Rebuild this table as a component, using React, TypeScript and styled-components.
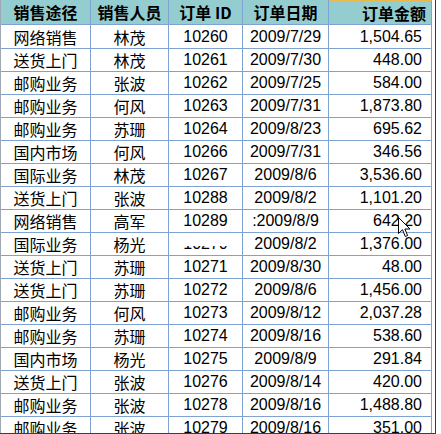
import React from "react";
import styled, { createGlobalStyle } from "styled-components";

const Global = createGlobalStyle`
  html, body { margin: 0; padding: 0; background: #ffffff; }
  body { font-family: "Liberation Sans", "Noto Sans CJK SC", sans-serif; }
`;

const Frame = styled.div`
  position: relative;
  width: 435px;
  height: 433px;
  overflow: hidden;
  border-right: 1px solid #3c3c3c;
  border-bottom: 1px solid #3c3c3c;
  box-sizing: content-box;
`;

const Grid = styled.div`
  display: grid;
  grid-template-columns: 90px 78px 74px 86px 103px;
  width: 432px;
  border-left: 1px solid #a0a8b4;
  box-sizing: border-box;
`;

type CellProps = { $align?: "center" | "right"; $head?: boolean; $cjk?: boolean; $h: number; $topLine?: boolean };

const Cell = styled.div<CellProps>`
  box-sizing: border-box;
  height: ${(p) => p.$h}px;
  display: flex;
  align-items: center;
  justify-content: ${(p) => (p.$align === "right" ? "flex-end" : "center")};
  padding-right: ${(p) => (p.$align === "right" ? (p.$head ? "5px" : "9px") : "0")};
  border-right: 1px solid #7ea2d2;
  border-bottom: 1px solid #7ea2d2;
  border-top: ${(p) => (p.$topLine ? "1px solid #e8b84a" : "none")};
  background: ${(p) => (p.$head ? "#94cdcf" : "#ffffff")};
  font-family: ${(p) => (p.$cjk || p.$head ? '"Noto Sans CJK SC", "Liberation Sans", sans-serif' : '"Liberation Sans", "Noto Sans CJK SC", sans-serif')};
  font-weight: ${(p) => (p.$head ? 700 : 400)};
  font-size: 16px;
  color: #000000;
  white-space: nowrap;
  line-height: 1;
`;

const Faded = styled.span`
  clip-path: inset(62% 0 0 0);
`;

const Cursor = styled.svg`
  position: absolute;
  left: 398px;
  top: 217px;
`;

type Row = [string, string, string, string, string];

const rows: Row[] = [
  ["网络销售", "林茂", "10260", "2009/7/29", "1,504.65"],
  ["送货上门", "林茂", "10261", "2009/7/30", "448.00"],
  ["邮购业务", "张波", "10262", "2009/7/25", "584.00"],
  ["邮购业务", "何风", "10263", "2009/7/31", "1,873.80"],
  ["邮购业务", "苏珊", "10264", "2009/8/23", "695.62"],
  ["国内市场", "何风", "10266", "2009/7/31", "346.56"],
  ["国际业务", "林茂", "10267", "2009/8/6", "3,536.60"],
  ["送货上门", "张波", "10288", "2009/8/2", "1,101.20"],
  ["网络销售", "高军", "10289", ":2009/8/9", "642.20"],
  ["国际业务", "杨光", "10270", "2009/8/2", "1,376.00"],
  ["送货上门", "苏珊", "10271", "2009/8/30", "48.00"],
  ["送货上门", "苏珊", "10272", "2009/8/6", "1,456.00"],
  ["邮购业务", "何风", "10273", "2009/8/12", "2,037.28"],
  ["邮购业务", "苏珊", "10274", "2009/8/16", "538.60"],
  ["国内市场", "杨光", "10275", "2009/8/9", "291.84"],
  ["送货上门", "张波", "10276", "2009/8/14", "420.00"],
  ["邮购业务", "张波", "10278", "2009/8/16", "1,488.80"],
  ["邮购业务", "张波", "10279", "2009/8/16", "351.00"],
];

const headers = ["销售途径", "销售人员", "订单 ID", "订单日期", "订单金额"];

export default function App() {
  return (
    <>
      <Global />
      <Frame>
        <Grid>
          {headers.map((h, i) => (
            <Cell key={h} $head $h={25} $align={i === 4 ? "right" : "center"} $topLine={i === 4}>
              {h}
            </Cell>
          ))}
          {rows.map((r, ri) => {
            const h = ri === 0 ? 24 : 23;
            return (
              <React.Fragment key={ri}>
                <Cell $h={h} $cjk>{r[0]}</Cell>
                <Cell $h={h} $cjk>{r[1]}</Cell>
                <Cell $h={h}>{ri === 9 ? <Faded>{r[2]}</Faded> : r[2]}</Cell>
                <Cell $h={h}>{r[3]}</Cell>
                <Cell $h={h} $align="right">{r[4]}</Cell>
              </React.Fragment>
            );
          })}
        </Grid>
        <Cursor width="13" height="21" viewBox="0 0 13 21">
          <path
            d="M0.5 0.5 L0.5 16.5 L4.5 12.7 L7.3 19.5 L9.6 18.5 L6.9 12 L12 12 Z"
            fill="#ffffff"
            stroke="#000000"
            strokeWidth="1"
            strokeLinejoin="miter"
          />
        </Cursor>
      </Frame>
    </>
  );
}
